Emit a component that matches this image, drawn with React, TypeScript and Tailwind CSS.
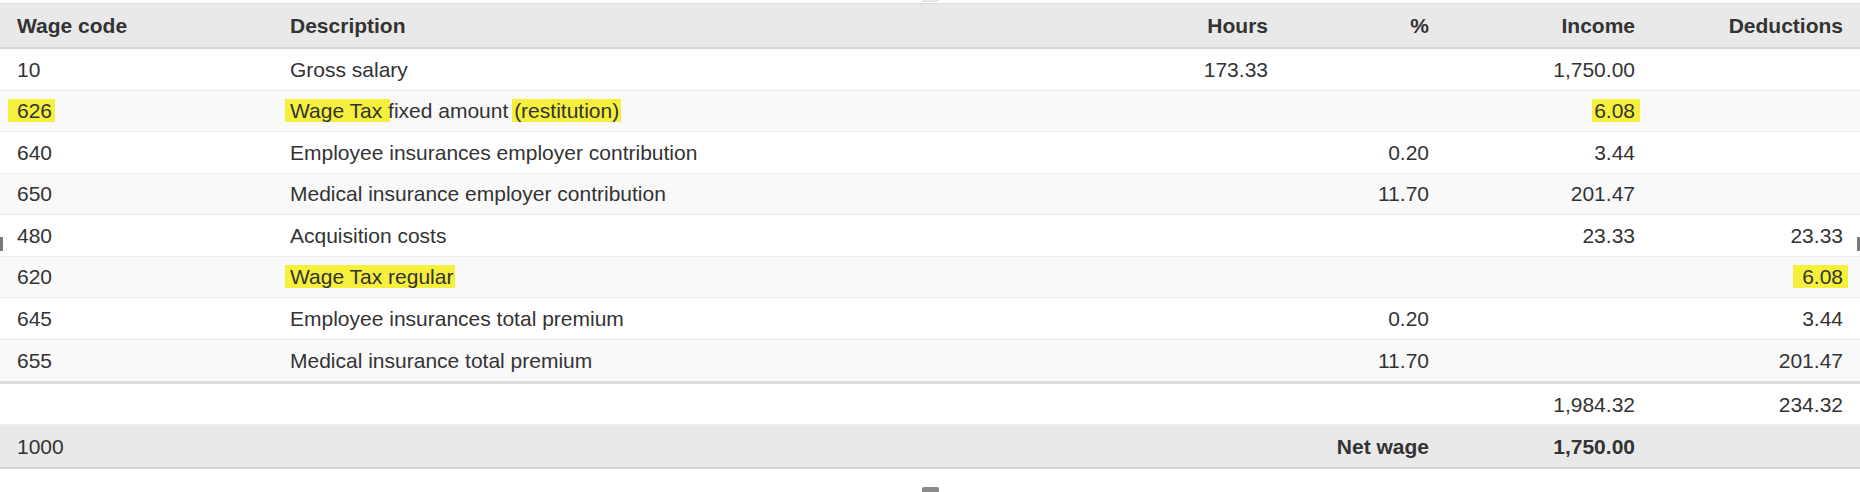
import React from "react";

type Row = {
  code: React.ReactNode;
  desc: React.ReactNode;
  hours?: string;
  pct?: string;
  income?: React.ReactNode;
  ded?: React.ReactNode;
};

const rows: Row[] = [
  { code: "10", desc: "Gross salary", hours: "173.33", income: "1,750.00" },
  {
    code: (
      <span className="bg-[#f5f03c] -ml-[9px] pl-[9px] -mr-[3px] pr-[3px]">626</span>
    ),
    desc: (
      <>
        <span className="bg-[#f5f03c] -ml-[5px] pl-[5px] -mr-[8px] pr-[8px]">Wage Tax</span>
        {" fixed amount "}
        <span className="bg-[#f5f03c] -mx-[2px] px-[2px]">(restitution)</span>
      </>
    ),
    income: <span className="bg-[#f5f03c] -ml-[2px] pl-[2px] -mr-[5px] pr-[5px]">6.08</span>,
  },
  { code: "640", desc: "Employee insurances employer contribution", pct: "0.20", income: "3.44" },
  { code: "650", desc: "Medical insurance employer contribution", pct: "11.70", income: "201.47" },
  { code: "480", desc: "Acquisition costs", income: "23.33", ded: "23.33" },
  {
    code: "620",
    desc: <span className="bg-[#f5f03c] -ml-[5px] pl-[5px] -mr-[2px] pr-[2px]">Wage Tax regular</span>,
    ded: <span className="bg-[#f5f03c] -ml-[9px] pl-[9px] -mr-[5px] pr-[5px]">6.08</span>,
  },
  { code: "645", desc: "Employee insurances total premium", pct: "0.20", ded: "3.44" },
  { code: "655", desc: "Medical insurance total premium", pct: "11.70", ded: "201.47" },
];

export default function App() {
  return (
    <div className="relative w-[1860px] h-[492px] bg-white overflow-hidden font-['Liberation_Sans',Arial,sans-serif] text-[21px] text-[#333] leading-none">
      <div className="pt-[3px]">
        <table className="w-full table-fixed border-separate border-spacing-0">
          <colgroup>
            <col className="w-[273px]" />
            <col />
            <col className="w-[180px]" />
            <col className="w-[161px]" />
            <col className="w-[206px]" />
            <col className="w-[208px]" />
          </colgroup>
          <thead>
            <tr className="h-[46px] bg-[#e9e9e9] font-bold">
              <th className="px-[17px] text-left border-t border-t-[#dedede] border-b-2 border-b-[#d6d6d6]">Wage code</th>
              <th className="px-[17px] text-left border-t border-t-[#dedede] border-b-2 border-b-[#d6d6d6]">Description</th>
              <th className="px-[17px] text-right border-t border-t-[#dedede] border-b-2 border-b-[#d6d6d6]">Hours</th>
              <th className="px-[17px] text-right border-t border-t-[#dedede] border-b-2 border-b-[#d6d6d6]">%</th>
              <th className="px-[17px] text-right border-t border-t-[#dedede] border-b-2 border-b-[#d6d6d6]">Income</th>
              <th className="px-[17px] text-right border-t border-t-[#dedede] border-b-2 border-b-[#d6d6d6]">Deductions</th>
            </tr>
          </thead>
          <tbody>
            {rows.map((r, i) => {
              const last = i === rows.length - 1;
              const bg = i % 2 === 1 ? "bg-[#f9f9f9]" : "bg-white";
              const cell = last
                ? "px-[17px] border-b-[3px] border-b-[#dcdcdc]"
                : "px-[17px] border-b border-b-[#ebebeb]";
              return (
                <tr key={i} className={`${bg} ${last ? "h-[44.5px]" : "h-[41.5px]"}`}>
                  <td className={`${cell} text-left`}>{r.code}</td>
                  <td className={`${cell} text-left whitespace-nowrap`}>{r.desc}</td>
                  <td className={`${cell} text-right`}>{r.hours}</td>
                  <td className={`${cell} text-right`}>{r.pct}</td>
                  <td className={`${cell} text-right`}>{r.income}</td>
                  <td className={`${cell} text-right`}>{r.ded}</td>
                </tr>
              );
            })}
            <tr className="h-[41px] bg-white">
              <td className="px-[17px] border-b border-b-[#efefef]"></td>
              <td className="px-[17px] border-b border-b-[#efefef]"></td>
              <td className="px-[17px] border-b border-b-[#efefef]"></td>
              <td className="px-[17px] border-b border-b-[#efefef]"></td>
              <td className="px-[17px] text-right border-b border-b-[#efefef]">1,984.32</td>
              <td className="px-[17px] text-right border-b border-b-[#efefef]">234.32</td>
            </tr>
            <tr className="h-[44px] bg-[#e9e9e9]">
              <td className="px-[17px] text-left border-b-2 border-b-[#d4d4d4]">1000</td>
              <td className="px-[17px] border-b-2 border-b-[#d4d4d4]"></td>
              <td className="px-[17px] border-b-2 border-b-[#d4d4d4]"></td>
              <td className="px-[17px] text-right font-bold border-b-2 border-b-[#d4d4d4]">Net wage</td>
              <td className="px-[17px] text-right font-bold border-b-2 border-b-[#d4d4d4]">1,750.00</td>
              <td className="px-[17px] border-b-2 border-b-[#d4d4d4]"></td>
            </tr>
          </tbody>
        </table>
      </div>
      <div className="absolute left-0 top-[237px] w-[3px] h-[14px] bg-[#7a7a7a]" />
      <div className="absolute right-0 top-[237px] w-[3px] h-[14px] bg-[#7a7a7a]" />
      <div className="absolute left-[922px] top-0 w-[17px] h-[2px] bg-[#e6e6e6]" />
      <div className="absolute left-[922px] top-[487px] w-[17px] h-[5px] rounded-t-[2px] bg-[#8a8a8a]" />
    </div>
  );
}
